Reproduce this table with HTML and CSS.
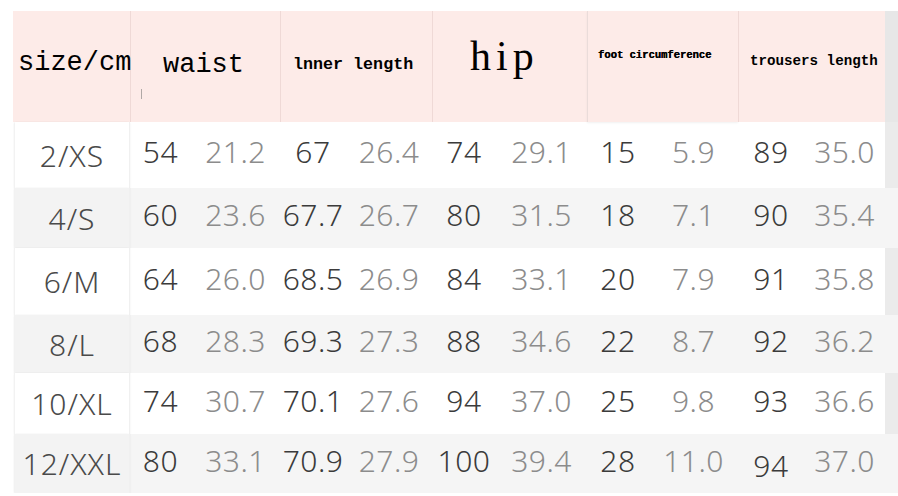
FILE: index.html
```html
<!DOCTYPE html>
<html>
<head>
<meta charset="utf-8">
<link rel="stylesheet" href="styles.css">
</head>
<body>
<div class="chart">
  <div class="head">
    <div class="hgap"></div>
    <div class="hcell h-size">size/cm</div>
    <div class="hcell h-waist">waist<span class="mark"></span></div>
    <div class="hcell h-inner">lnner length</div>
    <div class="hcell h-hip">hip</div>
    <div class="hcell h-foot">foot circumference</div>
    <div class="hcell h-trousers">trousers length</div>
    <div class="hstrip"></div>
  </div>

  <div class="row white r1">
    <div class="gap"></div><div class="size">2/XS</div>
    <div class="v cm">54</div><div class="v in">21.2</div>
    <div class="v cm">67</div><div class="v in">26.4</div>
    <div class="v cm">74</div><div class="v in">29.1</div>
    <div class="v cm">15</div><div class="v in">5.9</div>
    <div class="v cm">89</div><div class="v in">35.0</div>
    <div class="strip"></div>
  </div>
  <div class="row grey r2">
    <div class="gap"></div><div class="size">4/S</div>
    <div class="v cm">60</div><div class="v in">23.6</div>
    <div class="v cm">67.7</div><div class="v in">26.7</div>
    <div class="v cm">80</div><div class="v in">31.5</div>
    <div class="v cm">18</div><div class="v in">7.1</div>
    <div class="v cm">90</div><div class="v in">35.4</div>
    <div class="strip"></div>
  </div>
  <div class="row white r3">
    <div class="gap"></div><div class="size">6/M</div>
    <div class="v cm">64</div><div class="v in">26.0</div>
    <div class="v cm">68.5</div><div class="v in">26.9</div>
    <div class="v cm">84</div><div class="v in">33.1</div>
    <div class="v cm">20</div><div class="v in">7.9</div>
    <div class="v cm">91</div><div class="v in">35.8</div>
    <div class="strip"></div>
  </div>
  <div class="row grey r4">
    <div class="gap"></div><div class="size">8/L</div>
    <div class="v cm">68</div><div class="v in">28.3</div>
    <div class="v cm">69.3</div><div class="v in">27.3</div>
    <div class="v cm">88</div><div class="v in">34.6</div>
    <div class="v cm">22</div><div class="v in">8.7</div>
    <div class="v cm">92</div><div class="v in">36.2</div>
    <div class="strip"></div>
  </div>
  <div class="row white r5">
    <div class="gap"></div><div class="size">10/XL</div>
    <div class="v cm">74</div><div class="v in">30.7</div>
    <div class="v cm">70.1</div><div class="v in">27.6</div>
    <div class="v cm">94</div><div class="v in">37.0</div>
    <div class="v cm">25</div><div class="v in">9.8</div>
    <div class="v cm">93</div><div class="v in">36.6</div>
    <div class="strip"></div>
  </div>
  <div class="row grey r6">
    <div class="gap"></div><div class="size">12/XXL</div>
    <div class="v cm">80</div><div class="v in">33.1</div>
    <div class="v cm">70.9</div><div class="v in">27.9</div>
    <div class="v cm">100</div><div class="v in">39.4</div>
    <div class="v cm">28</div><div class="v in">11.0</div>
    <div class="v cm low">94</div><div class="v in">37.0</div>
    <div class="strip"></div>
  </div>
</div>
</body>
</html>
```

FILE: styles.css
```css
html, body {
  margin: 0;
  padding: 0;
  background: #ffffff;
}

.chart {
  width: 898px;
  padding-top: 11px;
  display: flex;
  flex-direction: column;
}

.head {
  display: grid;
  grid-template-columns: 13px 117px 150px 152px 155px 151px 147px 13px;
  height: 111px;
}

.hgap { background: #ffffff; }

.hcell {
  position: relative;
  background: #fdebe8;
  color: #000000;
  white-space: nowrap;
  box-sizing: border-box;
  border-left: 1px solid #efd9d6;
}

.h-size {
  border-left: none;
  font-family: "Liberation Mono", monospace;
  font-size: 27px;
  line-height: 27px;
  padding: 39px 0 0 5px;
  overflow: visible;
  z-index: 1;
}

.h-waist {
  font-family: "Liberation Mono", monospace;
  font-size: 27px;
  line-height: 27px;
  padding: 41px 0 0 32px;
}

.mark {
  position: absolute;
  left: 10px;
  top: 78px;
  width: 1px;
  height: 10px;
  background: #b0a8a6;
}

.h-inner {
  font-family: "Liberation Mono", monospace;
  font-weight: bold;
  font-size: 16.7px;
  line-height: 17px;
  padding: 45px 0 0 12px;
}

.h-hip {
  font-family: "Liberation Serif", serif;
  font-size: 42px;
  line-height: 42px;
  letter-spacing: 5px;
  padding: 24px 0 0 37px;
}

.h-foot {
  font-family: "Liberation Mono", monospace;
  font-weight: bold;
  font-size: 10.5px;
  line-height: 11px;
  padding: 39px 0 0 10px;
  border-left: 1px solid #eadcda;
  box-shadow: 0 1px 2px rgba(0, 0, 0, 0.06);
  text-shadow: 0.3px 0 0 #000;
}

.h-trousers {
  font-family: "Liberation Mono", monospace;
  font-weight: bold;
  font-size: 14.2px;
  line-height: 14px;
  padding: 43px 0 0 11px;
}

.hstrip { background: #e7e7e7; }

.row {
  display: grid;
  grid-template-columns: 15px 115px 61px 89px 66px 86px 64px 91px 62px 89px 66px 81px 13px;
  font-family: "Noto Sans", sans-serif;
  font-weight: 300;
  font-size: 30px;
  letter-spacing: 0.5px;
}

.r1 { height: 66px; }
.r2 { height: 60px; }
.r3 { height: 67px; }
.r4 { height: 58px; }
.r5 { height: 61px; }
.r6 { height: 59px; }

.white { background: #ffffff; }
.grey { background: #f5f5f5; }

.gap { background: #ffffff; }

.size {
  display: flex;
  align-items: center;
  justify-content: center;
  color: #4a4a4a;
  white-space: nowrap;
  letter-spacing: 1px;
  border-right: 1px solid #f0f0f0;
  box-shadow: -1px 0 2px rgba(0, 0, 0, 0.05), 0 1px 2px rgba(0, 0, 0, 0.07);
  position: relative;
  z-index: 1;
}

.white .size { background: #ffffff; }
.grey .size { background: #f3f3f3; }

.v {
  display: flex;
  align-items: center;
  justify-content: center;
  padding-bottom: 7px;
  white-space: nowrap;
}

.v.cm { color: #3b3b3b; }
.v.in { color: #8c8c8c; }
.v.low { padding-bottom: 0; padding-top: 3px; }

.white .strip { background: #ebebeb; }
.grey .strip { background: #f5f5f5; }
```
